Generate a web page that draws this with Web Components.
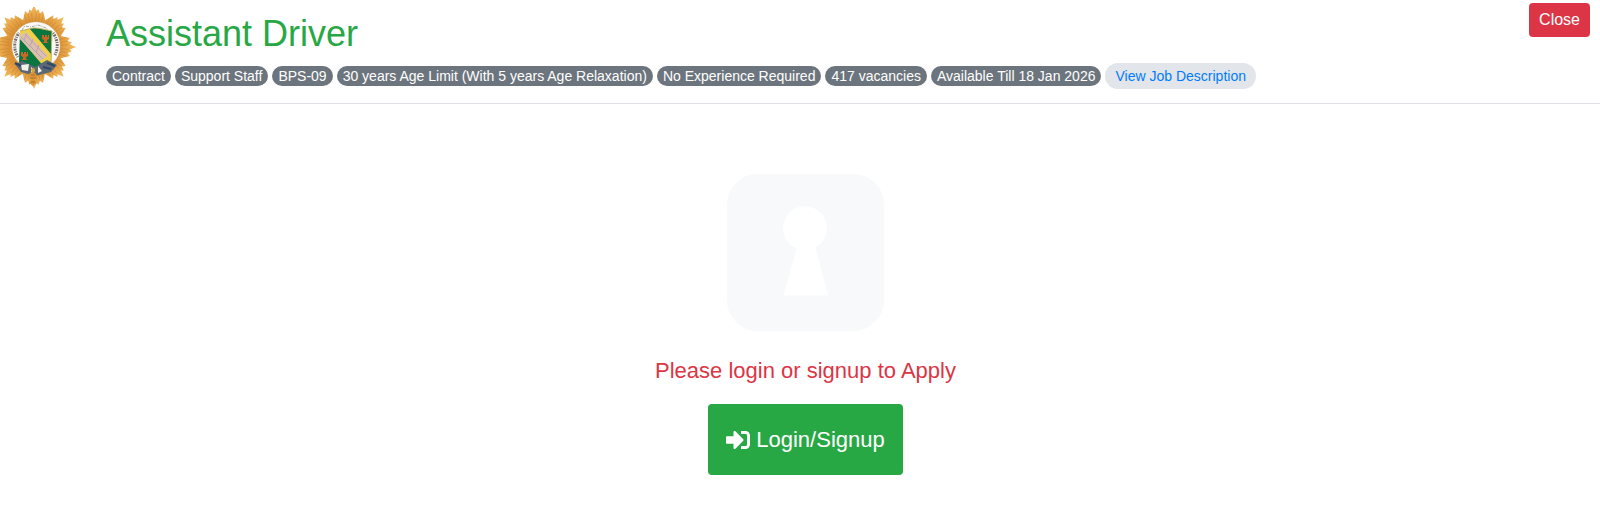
<!DOCTYPE html>
<html lang="en">
<head>
<meta charset="utf-8">
<meta name="viewport" content="width=device-width, initial-scale=1">
<title>Assistant Driver</title>
<style>
  body { margin: 0; background: #fff; color: #212529; font: 16px/24px "Liberation Sans", Arial, sans-serif; }
</style>
</head>
<body>
<job-page></job-page>

<template id="force-logo-template">
  <style>
    :host { display: block; width: 76px; height: 82px; }
    svg { display: block; width: 100%; height: 100%; }
  </style>
  <svg viewBox="0 7 76 82" role="img" aria-label="Force emblem">
    <defs>
      <radialGradient id="gold" gradientUnits="userSpaceOnUse" cx="34" cy="47" r="41">
        <stop offset=".6" stop-color="#d99135"/><stop offset=".8" stop-color="#e9a74a"/><stop offset="1" stop-color="#f0b95f"/>
      </radialGradient>
      <clipPath id="shield"><path d="M20 31C27 30 30 28 35 28C40 28 46 30 52 31L51 62C44 66 40 68 35 70C30 68 25 66 19 62Z"/></clipPath>
    </defs>
    <polygon id="star" fill="url(#gold)"/>
    <path id="rays" stroke="#bd7b28" stroke-width=".7" opacity=".6" fill="none"/>
    <circle cx="36" cy="46" r="25" fill="#d79b4c"/>
    <circle cx="36" cy="46" r="24" fill="#faf9f7"/>
    <path d="M18 57A21 21 0 0 1 19 33M53 33A21 21 0 0 1 55 55" fill="none" stroke="#5b5653" stroke-width="3" stroke-dasharray="1 1 2 1" opacity=".85"/>
    <path d="M22 30L25 26L31 27L38 25L46 28L49 31" fill="none" stroke="#aaa69f" stroke-width="1" stroke-dasharray="3 1 1 1"/>
    <g clip-path="url(#shield)">
      <path d="M17 26H54V72H17Z" fill="#0b7540"/>
      <path d="M17 35L22 26L30 29L56 60L45 68Z" fill="#f0d049"/>
      <path d="M18 37L26 32L48 56L40 61Z" fill="#dcbfae"/>
      <path d="M21 37L43 59M25 34L46 56M24 40L27 34M30 46L33 39M36 52L39 45" stroke="#b9a2b0" stroke-width="1"/>
    </g>
    <path d="M20 31C27 30 30 28 35 28C40 28 46 30 52 31L51 62" fill="none" stroke="#c9b458" stroke-width="1"/>
    <path d="M42 35H44V37H45V35H47V37H48V35H49V39L47 40V42L49 43H42L44 42V40L42 39Z" fill="#cb6723"/>
    <path d="M21 52H23V54H24V52H26V54H27V52H28V56L26 57V59L28 60H21L23 59V57L21 56Z" fill="#cb6723"/>
    <path d="M15 64L22 61L35 67L47 60L57 65L51 72L35 76L21 72Z" fill="#5c6873"/>
    <path d="M21 65L29 64L28 71L22 70ZM38 66L42 71L38 73ZM31 67L35 71L31 73Z" fill="#f4f1eb"/>
    <path d="M15 63L21 66M47 63L55 66M43 67L51 69" stroke="#30466a" stroke-width="2"/>
    <path d="M29 74L33 71L37 75L34 79L37 83L33 86L29 83L32 79Z" fill="#dc9734"/>
    <path d="M31 75H35M30 78H36M31 82H35" stroke="#a86f22" stroke-width="1"/>
    <circle cx="33" cy="70" r="2" fill="#d5a52b"/>
  </svg>
</template>

<template id="job-badge-template">
  <style>
    :host { display: block; padding: 2px 6px; border-radius: 10px; background: #6c757d; color: #fff; font-size: 14px; line-height: 16px; white-space: nowrap; }
  </style>
  <slot></slot>
</template>

<template id="job-header-template">
  <style>
    :host { display: flex; align-items: flex-start; box-sizing: border-box; padding: 3px 10px 14px 0; border-bottom: 1px solid #dee2e6; }
    force-logo { flex: none; margin: 4px 30px 0 0; }
    .details { flex: 1; min-width: 0; padding-top: 9px; }
    h1 { margin: 0 0 8px; color: #28a745; font-size: 36px; line-height: 43px; font-weight: 400; }
    .badges { display: flex; flex-wrap: wrap; align-items: center; gap: 4px; }
    a { padding: 4px 10px; border-radius: 13px; background: #e2e6ea; color: #007bff; font-size: 14px; line-height: 18px; text-decoration: none; white-space: nowrap; }
    button { flex: none; margin: 0; padding: 5px 10px; border: 0; border-radius: 4px; background: #dc3545; color: #fff; font: inherit; cursor: pointer; }
  </style>
  <force-logo></force-logo>
  <div class="details">
    <h1><slot name="title"></slot></h1>
    <div class="badges"><slot></slot><a href="#description">View Job Description</a></div>
  </div>
  <button type="button">Close</button>
</template>

<template id="login-prompt-template">
  <style>
    :host { display: flex; flex-direction: column; align-items: center; padding: 70px 0 40px 11px; }
    .lock { display: block; width: 157px; height: 157px; fill: #f8f9fa; }
    p { margin: 24px 0 18px; color: #dc3545; font-size: 22px; line-height: 31px; }
    button { display: flex; align-items: center; gap: 6px; margin: 0; padding: 18px; border: 0; border-radius: 4px; background: #28a745; color: #fff; font: inherit; font-size: 22px; line-height: 35px; cursor: pointer; }
    button svg { width: 24px; height: 24px; fill: currentColor; }
  </style>
  <svg class="lock" viewBox="0 0 157 157" aria-hidden="true"><path fill-rule="evenodd" d="M30 0H127Q139 0 148 9Q157 18 157 30V127Q157 139 148 148Q139 157 127 157H30Q18 157 9 148Q0 139 0 127V30Q0 18 9 9Q18 0 30 0ZM69.500 74.500L56.500 121.500H101L88.500 73.500A22 22 0 1 0 69.500 74.500Z"/></svg>
  <p><slot></slot></p>
  <button type="button"><svg viewBox="0 0 512 512" aria-hidden="true"><path d="M416 448h-84c-6.600 0-12-5.400-12-12v-40c0-6.600 5.400-12 12-12h84c17.700 0 32-14.300 32-32V160c0-17.700-14.300-32-32-32h-84c-6.600 0-12-5.400-12-12V76c0-6.600 5.400-12 12-12h84c53 0 96 43 96 96v192c0 53-43 96-96 96zm-47-209L201 71c-15-15-41-4.500-41 17v88H24c-13.300 0-24 10.700-24 24v112c0 13.300 10.700 24 24 24h136v88c0 21.500 26 32 41 17l168-168c9.300-9.400 9.300-24.600 0-34z"/></svg><span>Login/Signup</span></button>
</template>

<template id="job-page-template">
  <style>:host { display: block; }</style>
  <job-header>
    <span slot="title">Assistant Driver</span>
    <job-badge>Contract</job-badge>
    <job-badge>Support Staff</job-badge>
    <job-badge>BPS-09</job-badge>
    <job-badge>30 years Age Limit (With 5 years Age Relaxation)</job-badge>
    <job-badge>No Experience Required</job-badge>
    <job-badge>417 vacancies</job-badge>
    <job-badge>Available Till 18 Jan 2026</job-badge>
  </job-header>
  <main><login-prompt>Please login or signup to Apply</login-prompt></main>
</template>

<script>
  class TemplateElement extends HTMLElement {
    constructor() {
      super();
      const template = document.getElementById(this.localName + '-template');
      this.attachShadow({ mode: 'open' }).append(template.content.cloneNode(true));
    }
  }

  class ForceLogo extends TemplateElement {
    constructor() {
      super();
      // Eight long points, each flanked by two shorter ones, with deep valleys between.
      const at = (degrees, radius) => {
        const angle = degrees * Math.PI / 180;
        return [34 + radius * Math.sin(angle), 47 - radius * Math.cos(angle)].map(n => n.toFixed(1)).join(' ');
      };
      const outline = [[-22, 29], [-14, 37], [-10, 34], [-7, 38], [-4, 36], [0, 42], [4, 36], [7, 38], [10, 34], [14, 37]];
      const points = [];
      let rays = '';
      for (let base = 0; base < 360; base += 45) {
        for (const [offset, radius] of outline) points.push(at(base + offset, radius));
        for (const offset of [-16, -10, -4, 4, 10, 16]) rays += `M${at(base + offset, 25)}L${at(base + offset, 34)}`;
      }
      this.shadowRoot.getElementById('star').setAttribute('points', points.join(' '));
      this.shadowRoot.getElementById('rays').setAttribute('d', rays);
    }
  }

  customElements.define('force-logo', ForceLogo);
  customElements.define('job-badge', class extends TemplateElement {});
  customElements.define('job-header', class extends TemplateElement {});
  customElements.define('login-prompt', class extends TemplateElement {});
  customElements.define('job-page', class extends TemplateElement {});
</script>
</body>
</html>
